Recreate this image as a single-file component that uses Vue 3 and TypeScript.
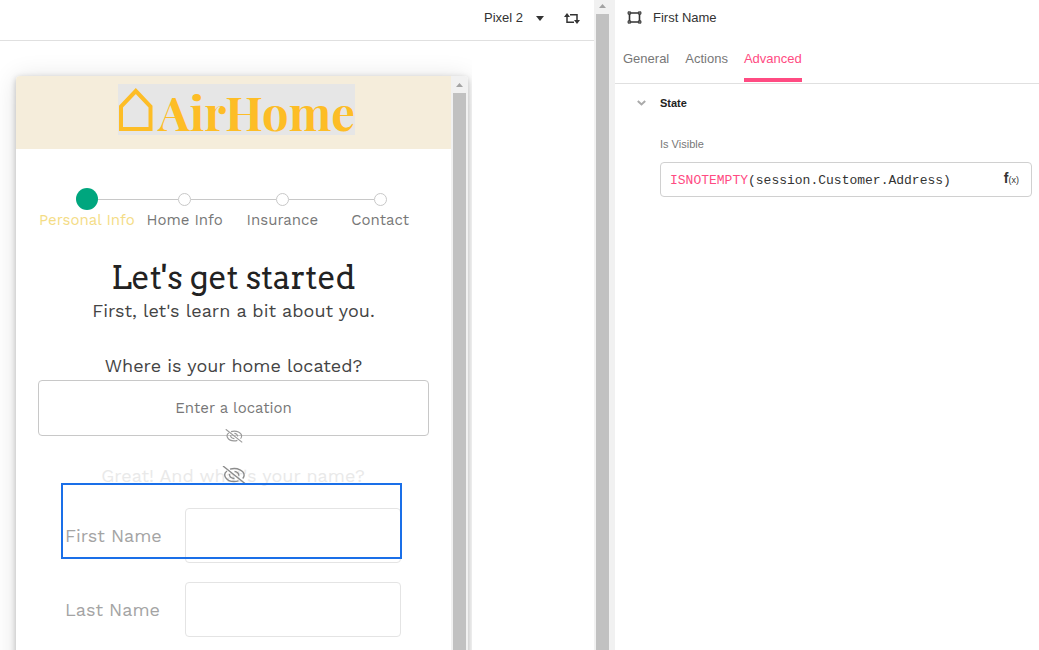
<script setup lang="ts">
import { computed, ref } from 'vue'

const device = ref('Pixel 2')
const steps = ['Personal Info', 'Home Info', 'Insurance', 'Contact']
const currentStep = ref(0)
const tabs = ['General', 'Actions', 'Advanced']
const activeTab = ref('Advanced')
const formula = ref('ISNOTEMPTY(session.Customer.Address)')
const location = ref('')
const firstName = ref('')
const lastName = ref('')
const stateOpen = ref(true)

const formulaParts = computed(() => {
  const match = formula.value.match(/^([A-Z]+)(.*)$/)
  return match ? { fn: match[1], rest: match[2] } : { fn: '', rest: formula.value }
})
</script>

<template>
  <div class="builder">
    <section class="workspace">
      <header class="toolbar">
        <label class="device">
          <select v-model="device" aria-label="Device">
            <option>Pixel 2</option>
          </select>
          <svg width="8" height="5" viewBox="0 0 8 5" aria-hidden="true"><path d="M0 0h8L4 5z" fill="#333" /></svg>
        </label>
        <button class="icon-button" type="button" aria-label="Rotate device">
          <svg width="16" height="11" viewBox="0 0 16 11" fill="none" stroke="#333" stroke-width="1.5">
            <path d="M3 2v7.2h7M6 1.8h7V9" />
            <path d="M0 4l3-4 3 4zM10 7l3 4 3-4z" fill="#333" stroke="none" />
          </svg>
        </button>
      </header>

      <div class="stage">
        <div class="phone">
          <main class="screen">
            <div class="brand">
              <div class="logo">
                <svg width="36" height="51" viewBox="0 0 36 51" fill="none" stroke="#fdbd26" stroke-width="4">
                  <path d="M3 45V22.500L17.800 7 32.500 22.500V45z" />
                </svg>
                <span>AirHome</span>
              </div>
            </div>

            <div class="form">
              <ol class="steps">
                <li v-for="(step, i) in steps" :key="step" :class="{ current: i === currentStep }">
                  <span class="marker"><i></i></span>
                  <span>{{ step }}</span>
                </li>
              </ol>

              <h1>Let's get started</h1>
              <p class="intro">First, let's learn a bit about you.</p>

              <label class="question" for="location">Where is your home located?</label>
              <div class="location">
                <input id="location" v-model="location" type="text" placeholder="Enter a location" />
                <svg class="hidden-mark" width="18" height="14" viewBox="0 0 24 18" fill="none" stroke="#999" stroke-width="1.5">
                  <path d="M1 0l22 17.500M5 5C0 8.500 4 15.500 12 15.500c1.500 0 3-.2 4.500-.7M8 3.200C15 .8 23 5 22 10c-.2 1-.6 1.800-1.300 2.500M7.500 8c-.3 2.500 2 4.600 5 4.500M12.500 5.500c2.500.2 4.500 2 4.300 4.200" />
                </svg>
              </div>

              <div class="names">
                <p class="faded">Great! And what's your name?</p>
                <svg class="hidden-mark large" width="24" height="18" viewBox="0 0 24 18" fill="none" stroke="#8c8c8c" stroke-width="1.4">
                  <path d="M1 0l22 17.500M5 5C0 8.500 4 15.500 12 15.500c1.500 0 3-.2 4.500-.7M8 3.200C15 .8 23 5 22 10c-.2 1-.6 1.800-1.300 2.500M7.500 8c-.3 2.500 2 4.600 5 4.500M12.500 5.500c2.500.2 4.500 2 4.300 4.200" />
                </svg>
                <div class="row first">
                  <label for="first">First Name</label>
                  <input id="first" v-model="firstName" type="text" />
                  <div class="selection"></div>
                </div>
                <div class="row">
                  <label for="last">Last Name</label>
                  <input id="last" v-model="lastName" type="text" />
                </div>
              </div>
            </div>
          </main>
          <div class="scrollbar phone-bar" aria-hidden="true"><b></b><i></i></div>
        </div>
      </div>
    </section>

    <div class="scrollbar pane-bar" aria-hidden="true"><b></b><i></i></div>

    <aside class="inspector">
      <div class="title">
        <svg width="15" height="13" viewBox="0 0 15 13" fill="none" stroke="#333" stroke-width="1.6">
          <path d="M2.500 2h10v9h-10z" />
          <path d="M1 .8h2.600v2.400H1zM11.400.8H14v2.400h-2.600zM1 9.800h2.600v2.400H1zM11.400 9.800H14v2.400h-2.600z" fill="#777" stroke-width=".8" />
        </svg>
        <span>First Name</span>
      </div>
      <nav class="tabs" role="tablist">
        <button
          v-for="tab in tabs"
          :key="tab"
          type="button"
          role="tab"
          :aria-selected="tab === activeTab"
          :class="{ active: tab === activeTab }"
          @click="activeTab = tab"
        >{{ tab }}</button>
      </nav>
      <button class="group" type="button" :aria-expanded="stateOpen" @click="stateOpen = !stateOpen">
        <svg width="9" height="6" viewBox="0 0 9 6" fill="none" stroke="#aaa" stroke-width="2"><path d="M.8 1l3.700 3.400L8.200 1" /></svg>
        <span>State</span>
      </button>
      <div v-if="stateOpen" class="property">
        <label for="visible">Is Visible</label>
        <div class="code">
          <div class="editor">
            <code aria-hidden="true"><em>{{ formulaParts.fn }}</em>{{ formulaParts.rest }}</code>
            <input id="visible" v-model="formula" type="text" spellcheck="false" />
          </div>
          <button class="fx" type="button" aria-label="Edit formula"><b>f</b><span>(x)</span></button>
        </div>
      </div>
    </aside>
  </div>
</template>

<style>
body {
  margin: 0;
}
</style>

<style scoped>
* {
  box-sizing: border-box;
}

.builder {
  display: grid;
  grid-template-columns: minmax(0, 594fr) 21px minmax(0, 424fr);
  height: 100vh;
  overflow: hidden;
  background: #fff;
  font: 13px/16px "Liberation Sans", Arial, sans-serif;
  color: #333;
}

button,
input,
select {
  font: inherit;
  color: inherit;
  padding: 0;
  margin: 0;
  border: 0;
  background: none;
}

.workspace {
  display: flex;
  flex-direction: column;
  min-width: 0;
  min-height: 0;
}

.toolbar {
  display: flex;
  justify-content: flex-end;
  align-items: center;
  gap: 20px;
  flex: none;
  height: 41px;
  padding: 0 14px 4px;
  border-bottom: 1px solid #e0e0e0;
}

.device {
  display: flex;
  align-items: center;
  gap: 12px;
}

.device select {
  appearance: none;
}

.icon-button {
  display: flex;
}

.stage {
  display: flex;
  flex: 1;
  min-height: 0;
  max-width: 472px;
  padding: 35px 4px 0 16px;
  overflow: hidden;
}

.phone {
  display: flex;
  flex: 1;
  min-width: 0;
  height: 720px;
  border-radius: 4px;
  background: #fff;
  box-shadow: 0 2px 6px rgba(0, 0, 0, 0.24), 0 2px 26px rgba(0, 0, 0, 0.12);
}

.screen {
  flex: 1;
  min-width: 0;
  font-family: "Work Sans", Inter, sans-serif;
}

.scrollbar {
  display: flex;
  flex-direction: column;
  align-items: center;
  background: #f1f1f1;
}

.scrollbar b {
  width: 7px;
  height: 4px;
  flex: none;
  background: #a3a3a3;
  clip-path: polygon(50% 0, 100% 100%, 0 100%);
}

.scrollbar i {
  flex: 1;
  width: 13px;
  background: #c1c1c1;
}

.phone-bar {
  flex: none;
  width: 17px;
  padding-top: 7px;
  gap: 6px;
  border-radius: 0 4px 0 0;
}

.pane-bar {
  padding: 4px 4px 0 0;
  gap: 6px;
}

.brand {
  display: flex;
  justify-content: center;
  height: 73px;
  padding-top: 8px;
  padding-left: 6px;
  border-radius: 4px 0 0 0;
  background: #f5eddb;
}

.logo {
  display: flex;
  gap: 4px;
  height: 51px;
  background: #e6e6e6;
  color: #fdbd26;
  font: bold 47px/56px "Playfair Display", "Liberation Serif", serif;
}

.form {
  padding: 39px 22px 0;
  text-align: center;
}

.steps {
  display: flex;
  margin: 0;
  padding: 0;
  list-style: none;
  font-size: 15px;
  line-height: 20px;
  color: #777;
}

.steps li {
  flex: 1 0 0;
  min-width: 0;
  white-space: nowrap;
}

.marker {
  display: flex;
  align-items: center;
  height: 22px;
}

.marker::before,
.marker::after {
  content: "";
  flex: 1;
  height: 1px;
  background: #c8c8c8;
}

li:first-child .marker::before,
li:last-child .marker::after {
  background: none;
}

.marker i {
  width: 13px;
  height: 13px;
  border: 1px solid #c8c8c8;
  border-radius: 50%;
}

.current {
  color: #f4dc85;
}

.current .marker i {
  width: 22px;
  height: 22px;
  border: 0;
  background: #00a67e;
}

h1 {
  margin: 28px 0 0;
  font: 400 32px/40px Arvo, "DejaVu Serif Condensed", "DejaVu Serif", serif;
  color: #222;
}

.intro,
.question,
.faded {
  margin: 3px 0 0;
  font-size: 18px;
  line-height: 20px;
  color: #444;
}

.question {
  display: block;
  margin-top: 35px;
}

.location {
  position: relative;
  margin-top: 4px;
}

.location input {
  display: block;
  width: 100%;
  height: 56px;
  border: 1px solid #c8c8c8;
  border-radius: 4px;
  font-size: 15px;
  text-align: center;
}

.location input::placeholder {
  color: #777;
  opacity: 1;
}

.hidden-mark {
  position: absolute;
  left: 50%;
  bottom: -7px;
  margin-left: -9px;
}

.names {
  position: relative;
  padding: 30px 28px 0 27px;
}

.names .faded {
  margin: 0;
  color: #e9e9e9;
}

.hidden-mark.large {
  top: 30px;
  bottom: auto;
  margin-left: -12px;
}

.row {
  display: flex;
  align-items: center;
  position: relative;
  margin-top: 19px;
  font-size: 18px;
  color: #a4a4a4;
}

.row.first {
  margin-top: 22px;
}

.row label {
  flex: none;
  width: 120px;
  text-align: left;
}

.row input {
  flex: 1;
  min-width: 0;
  height: 55px;
  border: 1px solid #e4e4e4;
  border-radius: 4px;
}

.selection {
  position: absolute;
  inset: -25px -1px 4px -4px;
  border: 2px solid #1a6fe8;
  pointer-events: none;
}

.inspector {
  min-width: 0;
}

.title {
  display: flex;
  align-items: center;
  gap: 11px;
  height: 35px;
  padding-left: 12px;
}

.tabs {
  display: flex;
  gap: 16px;
  height: 49px;
  padding: 0 8px;
  border-bottom: 1px solid #e0e0e0;
  color: #777;
}

.tabs button {
  height: 47px;
  padding-top: 4px;
  border-bottom: 4px solid transparent;
}

.tabs .active {
  color: #ff4b82;
  border-color: #ff4b82;
}

.group {
  display: flex;
  align-items: center;
  gap: 14px;
  height: 38px;
  padding-left: 22px;
  font-size: 11px;
  font-weight: bold;
  color: #222;
}

.property {
  padding: 14px 7px 0 45px;
}

.property label {
  display: block;
  font-size: 11px;
  line-height: 16px;
  color: #777;
}

.code {
  display: flex;
  align-items: center;
  height: 35px;
  margin-top: 10px;
  padding: 0 12px 0 9px;
  border: 1px solid #d0d0d0;
  border-radius: 4px;
}

.editor {
  display: grid;
  flex: 1;
  min-width: 0;
  padding-top: 2px;
  overflow: hidden;
  font: 13px/18px "Liberation Mono", "Courier New", monospace;
}

.editor > * {
  grid-area: 1 / 1;
  min-width: 0;
  font: inherit;
}

.editor code {
  white-space: pre;
}

.editor em {
  font-style: normal;
  color: #ff4b82;
}

.editor input {
  color: transparent;
  caret-color: #333;
  outline: 0;
}

.fx {
  display: flex;
  align-items: baseline;
  padding-bottom: 2px;
}

.fx b {
  font-size: 14px;
}

.fx span {
  font-size: 9px;
}
</style>
